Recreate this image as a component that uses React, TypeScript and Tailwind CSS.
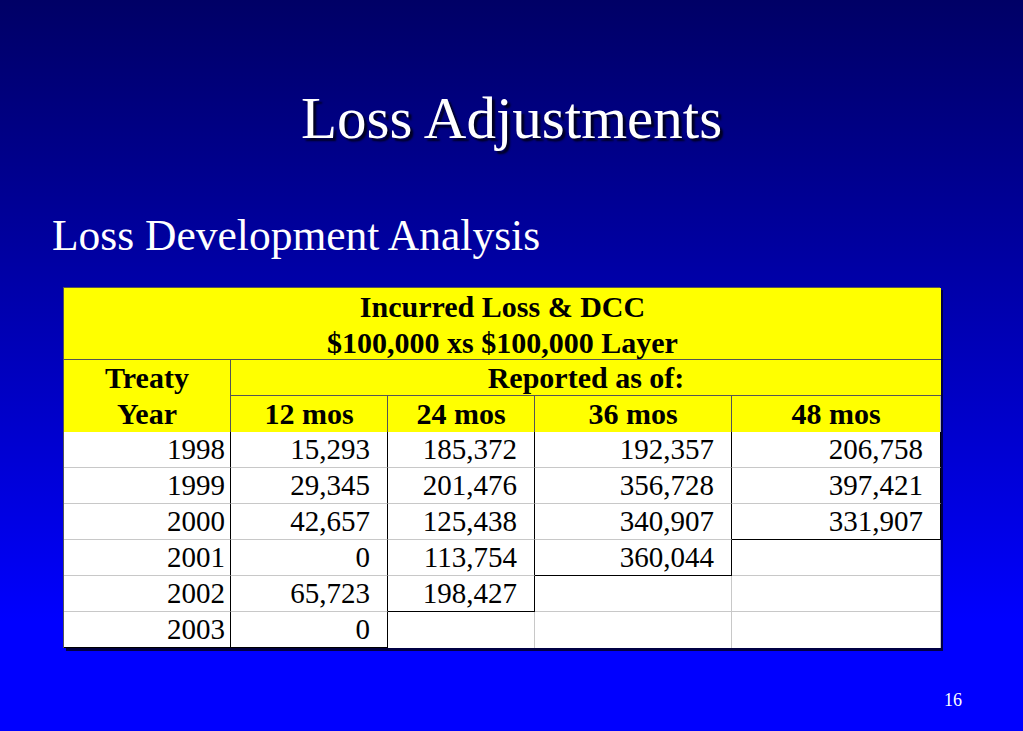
const years = ['1998', '1999', '2000', '2001', '2002', '2003'];

// values per treaty year, one entry per development age (12, 24, 36, 48 mos)
const losses: string[][] = [
  ['15,293', '185,372', '192,357', '206,758'],
  ['29,345', '201,476', '356,728', '397,421'],
  ['42,657', '125,438', '340,907', '331,907'],
  ['0', '113,754', '360,044'],
  ['65,723', '198,427'],
  ['0'],
];

const ages = ['12 mos', '24 mos', '36 mos', '48 mos'];

export default function App() {
  return (
    <div className="w-[1023px] h-[731px] overflow-hidden flex flex-col bg-linear-to-b from-[#000066] to-[#0000ff] to-[85%] font-['Liberation_Serif','Times_New_Roman',serif]">
      <h1 className="mt-[88px] h-[60px] leading-[60px] text-center text-[59px] text-white [text-shadow:3px_3px_2px_#000022]">
        Loss Adjustments
      </h1>

      <h2 className="mt-[63px] pl-[52px] h-[48px] leading-[48px] text-[43.5px] text-white">
        Loss Development Analysis
      </h2>

      <div className="mt-[28px] ml-[63px] w-[877px] grid grid-cols-[167px_157px_147px_197px_209px] auto-rows-[36px] bg-white border-l border-t border-[#555] shadow-[3px_3px_0_#000044] text-black text-[29px]">
        {/* header */}
        <div className="col-span-5 row-span-2 bg-[#ffff00] border-b border-[#555] flex flex-col items-center font-bold text-[30px] leading-[36px] pt-px">
          <span>Incurred Loss &amp; DCC</span>
          <span>$100,000 xs $100,000 Layer</span>
        </div>
        <div className="row-span-2 bg-[#ffff00] border-r border-[#555] flex flex-col items-center font-bold text-[30px] leading-[36px]">
          <span>Treaty</span>
          <span>Year</span>
        </div>
        <div className="col-span-4 bg-[#ffff00] border-b border-[#555] text-center font-bold text-[30px] leading-[36px]">
          Reported as of:
        </div>
        {ages.map((age, i) => (
          <div
            key={age}
            className={`bg-[#ffff00] text-center font-bold text-[30px] leading-[36px] ${
              i < 3 ? 'border-r border-[#555]' : 'border-r border-[#bbb]'
            }`}
          >
            {age}
          </div>
        ))}

        {/* data */}
        {years.map((year, row) => {
          const vals = losses[row];
          return [
            <div
              key={year}
              className={`text-right pr-[5px] leading-[35px] border-r border-black ${
                row === 5 ? 'border-b border-b-black' : 'border-b border-b-[#c8c8c8]'
              }`}
            >
              {year}
            </div>,
            ...ages.map((_, col) => {
              const val = vals[col];
              const filled = val !== undefined;
              const belowFilled = row < 5 && losses[row + 1][col] !== undefined;
              const right = filled ? 'border-r border-black' : 'border-r border-[#c8c8c8]';
              const bottom =
                filled && !belowFilled
                  ? 'border-b border-b-black'
                  : row === 5
                    ? ''
                    : 'border-b border-b-[#c8c8c8]';
              return (
                <div
                  key={year + col}
                  className={`text-right pr-[17px] leading-[35px] ${right} ${bottom}`}
                >
                  {val}
                </div>
              );
            }),
          ];
        })}
      </div>

      <div className="mt-[42px] pr-[61px] text-right text-[18px] leading-[20px] text-white">16</div>
    </div>
  );
}
